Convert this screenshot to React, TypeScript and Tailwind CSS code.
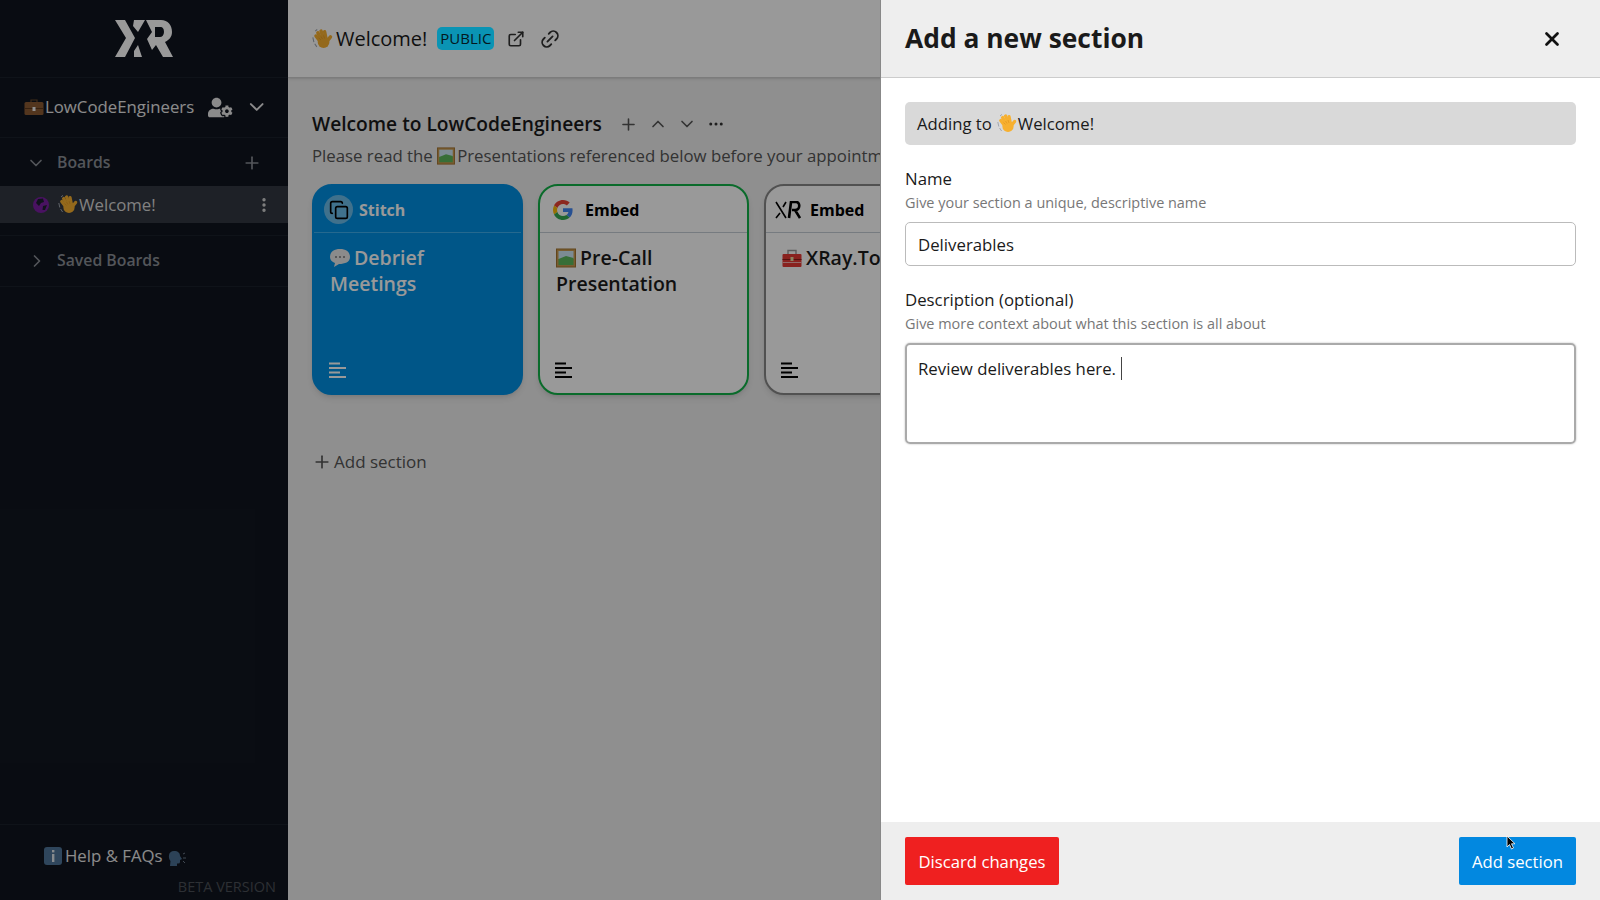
import React from "react";
import { ChevronDown, ChevronRight, ChevronUp, Plus, EllipsisVertical, Ellipsis, ExternalLink, Link2, X, Copy } from "lucide-react";
import { FaUserCog } from "react-icons/fa";

const Hand = ({ s = 20 }: { s?: number }) => (
  <svg width={s} height={s} viewBox="0 0 20 20" className="inline-block shrink-0 align-[-3px]">
    <path d="M0.8 9 L1.8 13.5 M2.6 15 L4.6 18 M3 3 L5 1.4" stroke="#a0a7b0" strokeWidth="1" fill="none" />
    <g stroke="#f7b02f" strokeWidth="3.3" strokeLinecap="round" fill="none">
      <path d="M8 13 L3.8 7.6" />
      <path d="M9.5 12 L5.6 4.6" />
      <path d="M11.5 11 L8.6 3" />
      <path d="M13.5 11 L12 3.6" />
      <path d="M14 13 L17.6 8.4" />
    </g>
    <circle cx="11" cy="13.4" r="5.6" fill="#f7b02f" />
    <path d="M6.5 9.5 L8.5 11.5 M8.5 8 L10 10.5 M11 7 L12 10" stroke="#d98a1a" strokeWidth="0.5" />
  </svg>
);
const Frame = ({ s = 20 }: { s?: number }) => (
  <svg width={s} height={s} viewBox="0 0 20 20" className="inline-block shrink-0 align-[-3px]">
    <rect x="0.5" y="1" width="19" height="18" fill="#c99a50" stroke="#a3742f" />
    <rect x="2.5" y="3" width="15" height="8" fill="#cfe8f5" />
    <path d="M2.5 11 L10 8 L17.5 10 V17 H2.5 Z" fill="#5cb85c" />
  </svg>
);
const Case = () => (
  <svg width="20" height="20" viewBox="0 0 20 20" className="inline-block shrink-0 align-[-3px]">
    <path d="M7 5 V3 H13 V5" fill="none" stroke="#6b4a2b" strokeWidth="1.2" />
    <rect x="0.5" y="5" width="19" height="13" rx="1.5" fill="#8a5a33" />
    <rect x="0.5" y="11" width="19" height="1" fill="#5c3a1d" />
    <rect x="8.5" y="10" width="3" height="4" fill="#eee" />
  </svg>
);
const Bubble = () => (
  <svg width="20" height="20" viewBox="0 0 20 20" className="inline-block shrink-0 align-[-3px]">
    <path d="M10 1 C16 1 20 4 20 9 C20 14 15 16 9 16 L4 19 L5 15 C2 14 0 12 0 9 C0 4 4 1 10 1 Z" fill="#e8e8e8" />
    <circle cx="6" cy="9" r="1" fill="#777" /><circle cx="10" cy="9" r="1" fill="#777" /><circle cx="14" cy="9" r="1" fill="#777" />
  </svg>
);
const Toolbox = () => (
  <svg width="20" height="20" viewBox="0 0 20 20" className="inline-block shrink-0 align-[-3px]">
    <path d="M6 6 V2.5 H14 V6" fill="none" stroke="#9a9a9a" strokeWidth="1.4" />
    <rect x="0.5" y="6" width="19" height="13" rx="1" fill="#e53935" />
    <rect x="0.5" y="11" width="19" height="1" fill="#8f1f1c" />
    <rect x="0.5" y="14" width="19" height="1" fill="#f7b0ae" />
    <rect x="8.5" y="9" width="3" height="4" fill="#e8d9a0" />
  </svg>
);
const Info = () => (
  <svg width="18" height="18" viewBox="0 0 18 18" className="inline-block shrink-0 align-[-2px]">
    <rect width="18" height="18" rx="3" fill="#4f7699" />
    <rect x="8" y="3" width="2.4" height="2.4" fill="#dfe6ec" />
    <rect x="8" y="7" width="2.4" height="8" fill="#dfe6ec" />
  </svg>
);
const Speaking = () => (
  <svg width="18" height="18" viewBox="0 0 18 18" className="inline-block shrink-0 align-[-4px]">
    <path d="M6 2 C10 2 12 4 12 7 L14 10 L12 11 V13 Q12 15 9 14.5 L9 17 H2 L2.5 12 C0 9 0 2 6 2 Z" fill="#4a6f92" />
    <path d="M15 5 L17 4 M15 9 L18 9 M15 12 L17 14" stroke="#6f7c8a" strokeWidth="1" />
  </svg>
);
const Globe = () => (
  <svg width="16" height="16" viewBox="0 0 16 16" className="shrink-0">
    <circle cx="8" cy="8" r="8" fill="#7a1fa2" />
    <path d="M5 2 L10 1.5 L11 5 L8 6 L6 9 L3 6 Z M10 9 L14 8 L12 13 L9.5 13 Z" fill="#1c2030" />
  </svg>
);
const Lines = ({ c }: { c: string }) => (
  <svg width="17" height="17" viewBox="0 0 17 17" className="shrink-0">
    <rect x="0" y="0.5" width="11" height="2" fill={c} />
    <rect x="0" y="5" width="17" height="2" fill={c} />
    <rect x="0" y="9.5" width="11" height="2" fill={c} />
    <rect x="0" y="14" width="17" height="2" fill={c} />
  </svg>
);
const Google = () => (
  <svg width="20" height="20" viewBox="0 0 48 48" className="shrink-0">
    <path fill="#EA4335" d="M24 9.5c3.54 0 6.71 1.22 9.21 3.6l6.85-6.85C35.9 2.38 30.47 0 24 0 14.62 0 6.51 5.38 2.56 13.22l7.98 6.19C12.43 13.72 17.74 9.5 24 9.5z" />
    <path fill="#4285F4" d="M46.98 24.55c0-1.57-.15-3.09-.38-4.55H24v9.02h12.94c-.58 2.96-2.26 5.48-4.78 7.18l7.73 6c4.51-4.18 7.09-10.36 7.09-17.65z" />
    <path fill="#FBBC05" d="M10.53 28.59c-.48-1.45-.76-2.99-.76-4.59s.27-3.14.76-4.59l-7.98-6.19C.92 16.46 0 20.12 0 24c0 3.88.92 7.54 2.56 10.78l7.97-6.19z" />
    <path fill="#34A853" d="M24 48c6.48 0 11.93-2.13 15.89-5.81l-7.73-6c-2.15 1.45-4.92 2.3-8.16 2.3-6.26 0-11.57-4.22-13.47-9.91l-7.98 6.19C6.51 42.62 14.62 48 24 48z" />
  </svg>
);
const Logo = ({ big, c }: { big?: boolean; c: string }) =>
  big ? (
    <svg width="60" height="39" viewBox="0 0 60 39" className="shrink-0">
      <path d="M1 1 H11 L21 19 L11 38 H1 L12 19 Z" fill={c} />
      <path d="M20 1 H31 L24 13 L19 7 Z M20 38 H28 L24 26 L20 32 Z" fill={c} />
      <path fillRule="evenodd" d="M32 1 H47 C54 1 58 6 58 13 C58 18 55 21 51 23 L59 38 H49 L42 26 L38 31 L33 20 L38 13 Z M41 8 H46 C49 8 50 10 50 13 C50 16 48 18 46 18 H41 Z" fill={c} />
    </svg>
  ) : (
    <svg width="26" height="18" viewBox="0 0 26 18" className="shrink-0">
      <path d="M1 1 L11 17 M11 1 L8 6 M5 12 L1 17" stroke={c} strokeWidth="1.6" fill="none" />
      <path d="M14 17 L16 1 H21 C25.5 1 25.5 9 20 9 H17 M20 9 L25 17" stroke={c} strokeWidth="2.6" fill="none" />
    </svg>
  );

function Card({ border, bg, title, icon, light, pad = "pl-[10px]", gap = "gap-[6px]", children }: { border: string; bg: string; title: string; icon: React.ReactNode; light?: boolean; pad?: string; gap?: string; children: React.ReactNode }) {
  return (
    <div className={`w-[211px] h-[211px] shrink-0 rounded-[20px] border-2 flex flex-col shadow-md ${border} ${bg}`}>
      <div className={`h-[47px] flex items-center pt-[1px] ${pad} ${gap} border-b ${light ? "border-[#3fb0ee]" : "border-[#c5cdd6]"}`}>
        {icon}
        <span className={`text-[16px] font-bold ${light ? "text-white" : "text-black"}`}>{title}</span>
      </div>
      <div className={`px-[16px] pt-[12px] text-[19.5px] leading-[26px] font-semibold flex-1 ${light ? "text-white" : "text-[#1c1c1c]"}`}>{children}</div>
      <div className="pl-[15px] pb-[14px]"><Lines c={light ? "#fff" : "#000"} /></div>
    </div>
  );
}

export default function App() {
  return (
    <div className="relative w-[1600px] h-[900px] overflow-hidden flex bg-white text-[#1a1a1a]" style={{ fontFamily: '"Open Sans", "Noto Sans", sans-serif' }}>
      {/* Sidebar */}
      <aside className="w-[288px] shrink-0 h-full bg-[#10151f] text-[#e8e8e8] flex flex-col">
        <div className="h-[78px] shrink-0 flex items-center justify-center border-b border-[#1a202b]">
          <Logo big c="#ffffff" />
        </div>
        <div className="h-[60px] shrink-0 flex items-center pl-[24px] pr-[20px] pb-[1px] border-b border-[#1a202b]">
          <Case />
          <span className="text-[16.8px] ml-[1px] whitespace-nowrap">LowCodeEngineers</span>
          <FaUserCog className="ml-[14px] text-[#e8e8e8]" size={25} />
          <ChevronDown className="ml-[12px]" size={24} strokeWidth={2} />
        </div>
        <div className="h-[48px] shrink-0 flex items-center pl-[26px] pr-[26px] pt-[1px] text-[#8b8f96]">
          <ChevronDown size={20} />
          <span className="ml-[11px] text-[15.8px] font-semibold flex-1">Boards</span>
          <Plus size={20} />
        </div>
        <div className="h-[37px] shrink-0 flex items-center pl-[33px] pr-[15px] bg-[#333841] text-[#d8d8d8]">
          <Globe />
          <span className="ml-[9px]"><Hand /></span>
          <span className="text-[16.8px] flex-1 ml-[1px]">Welcome!</span>
          <EllipsisVertical size={18} strokeWidth={2.5} />
        </div>
        <div className="h-[13px] shrink-0 border-b border-[#1a202b]" />
        <div className="h-[51px] shrink-0 flex items-center pl-[27px] text-[#8b8f96] border-b border-[#1a202b]">
          <ChevronRight size={20} />
          <span className="ml-[10px] text-[15.8px] font-semibold">Saved Boards</span>
        </div>
        <div className="flex-1" />
        <div className="h-[76px] shrink-0 border-t border-[#1a202b] flex flex-col">
          <div className="flex items-center pl-[44px] mt-[18px] text-[#e8e8e8]">
            <Info />
            <span className="text-[16.8px] ml-[3px]">Help &amp; FAQs</span>
            <span className="ml-[5px] mt-[2px]"><Speaking /></span>
          </div>
          <div className="text-right pr-[12px] mt-[7px] text-[14.5px] text-[#4b5057]">BETA VERSION</div>
        </div>
      </aside>

      {/* Main */}
      <main className="flex-1 h-full bg-[#eeeeee] flex flex-col min-w-0">
        <header className="h-[78px] shrink-0 bg-white border-b border-[#cfcfcf] flex items-center pl-[24px] shadow-sm">
          <Hand s={21} />
          <span className="text-[20px] ml-[3px]">Welcome!</span>
          <span className="relative z-10 ml-[10px] h-[23px] w-[57px] rounded-[5px] bg-[#0a94b4] text-[15px] font-medium leading-[23px] text-center text-[#04181d]">PUBLIC</span>
          <ExternalLink className="ml-[13px] text-[#333]" size={18} strokeWidth={2.2} />
          <Link2 className="ml-[14px] -rotate-45 text-[#333]" size={22} />
        </header>
        <section className="pl-[24px] pt-[31px]">
          <div className="flex items-center h-[30px]">
            <h2 className="text-[19.2px] font-semibold whitespace-nowrap">Welcome to LowCodeEngineers</h2>
            <Plus className="ml-[17px] text-[#555]" size={19} />
            <ChevronUp className="ml-[10px] text-[#555]" size={20} />
            <ChevronDown className="ml-[9px] text-[#555]" size={20} />
            <Ellipsis className="ml-[10px] text-[#333]" size={18} />
          </div>
          <p className="text-[16.8px] text-[#555] mt-[4px] whitespace-nowrap leading-[26px]">Please read the <Frame s={18} /><span className="ml-[2px]">Presentations referenced below before your appointment</span></p>
          <div className="flex gap-[15px] mt-[15px]">
            <Card border="border-[#0090e3]" bg="bg-[#0090e3]" title="Stitch" light icon={
              <span className="w-[29px] h-[29px] rounded-full bg-[#6cbcea] flex items-center justify-center text-black"><Copy size={20} strokeWidth={2} /></span>
            }>
              <Bubble /><span className="ml-[4px]">Debrief</span> Meetings
            </Card>
            <Card border="border-[#12b348]" bg="bg-white" title="Embed" pad="pl-[13px]" gap="gap-[12px]" icon={<Google />}>
              <Frame /><span className="ml-[4px]">Pre-Call</span> Presentation
            </Card>
            <Card border="border-[#888]" bg="bg-white" title="Embed" pad="pl-[9px]" gap="gap-[9px]" icon={<Logo c="#000" />}>
              <Toolbox /><span className="ml-[4px]">XRay.Tools</span>
            </Card>
          </div>
          <div className="flex items-center mt-[54px] text-[#555]">
            <Plus size={20} />
            <span className="text-[17px] ml-[2px]">Add section</span>
          </div>
        </section>
      </main>

      {/* Dim layer */}
      <div className="absolute inset-0 bg-black/40" />

      {/* Drawer */}
      <div className="absolute top-0 right-0 bottom-0 w-[720px] bg-white border-l border-[#888] flex flex-col">
        <div className="h-[78px] shrink-0 bg-[#eeeeee] border-b border-[#ccc] flex items-center justify-between pl-[24px] pr-[37px]">
          <h1 className="text-[26.4px] font-bold text-[#1a1a1a] mt-[1px]">Add a new section</h1>
          <X size={22} strokeWidth={3} className="text-[#111]" />
        </div>
        <div className="flex-1 pl-[24px] pr-[24px] pt-[24px]">
          <div className="h-[43px] bg-[#d9d9d9] rounded-[5px] flex items-center pl-[12px] pt-[1px] text-[16.7px]">
            <span>Adding to </span><span className="ml-[5px]"><Hand /></span><span className="ml-[1px]">Welcome!</span>
          </div>
          <label className="block text-[16.8px] leading-[24px] mt-[22px]">Name</label>
          <p className="text-[14.45px] leading-[20px] mt-[2px] text-[#777]">Give your section a unique, descriptive name</p>
          <div className="mt-[9px] h-[44px] border border-[#bbb] rounded-[5px] flex items-center pl-[12px] pt-[1px] text-[16.8px]">Deliverables</div>
          <label className="block text-[16.8px] leading-[24px] mt-[22px]">Description (optional)</label>
          <p className="text-[14.45px] leading-[20px] mt-[2px] text-[#777]">Give more context about what this section is all about</p>
          <div className="mt-[9px] h-[101px] border-2 border-[#aaa] rounded-[5px] pl-[11px] pt-[12px] text-[16.8px] leading-[24px] flex items-start shadow-[0_0_2px_rgba(0,0,0,0.3)]">
            <span>Review deliverables here.</span><span className="ml-[5px] w-px h-[23px] bg-[#444]" />
          </div>
        </div>
        <div className="relative h-[78px] shrink-0 bg-[#eeeeee] flex items-center justify-between pl-[24px] pr-[24px] pb-[1px]">
          <button className="h-[48px] w-[154px] pt-[2px] bg-[#ef2020] text-white rounded-[2px] text-[16.7px]">Discard changes</button>
          <button className="h-[48px] w-[117px] pt-[2px] bg-[#0288e0] text-white rounded-[2px] text-[16.7px]">Add section</button>
          <svg width="11" height="15" viewBox="0 0 11 15" className="absolute left-[625px] top-[13px]">
            <path d="M1 1 V12 L3.5 9.5 L5.5 14 L7.5 13 L5.5 8.8 H9 Z" fill="#000" stroke="#fff" strokeWidth="0.8" />
          </svg>
        </div>
      </div>
    </div>
  );
}
